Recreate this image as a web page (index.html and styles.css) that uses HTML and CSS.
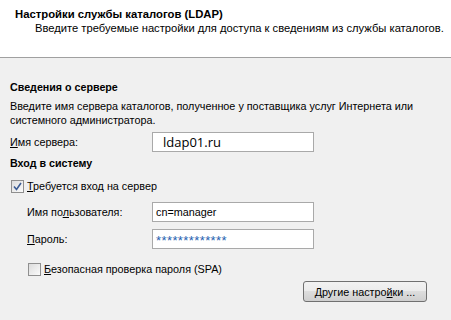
FILE: index.html
```html
<!DOCTYPE html>
<html lang="ru">
<head>
<meta charset="utf-8">
<link rel="stylesheet" href="styles.css">
</head>
<body>
<div class="window">
  <header class="header">
    <div class="title">Настройки службы каталогов (LDAP)</div>
    <div class="subtitle">Введите требуемые настройки для доступа к сведениям из службы каталогов.</div>
  </header>
  <main class="content">
    <div class="section-title first">Сведения о сервере</div>
    <p class="desc">Введите имя сервера каталогов, полученное у поставщика услуг Интернета или системного администратора.</p>
    <div class="row r-server">
      <label class="label"><u>И</u>мя сервера:</label>
      <div class="input big">ldap01.ru</div>
    </div>
    <div class="section-title second">Вход в систему</div>
    <div class="check-row">
      <span class="checkbox checked"><svg width="9" height="9" viewBox="0 0 9 9"><path d="M1 4.5 L3.5 7.5 L8 1" fill="none" stroke="#3c5c94" stroke-width="1.6"/></svg></span>
      <span><u>Т</u>ребуется вход на сервер</span>
    </div>
    <div class="indent">
      <div class="row r-user">
        <label class="label">Имя по<u>л</u>ьзователя:</label>
        <div class="input">cn=manager</div>
      </div>
      <div class="row r-pass">
        <label class="label"><u>П</u>ароль:</label>
        <div class="input pass">*************</div>
      </div>
      <div class="check-row spa">
        <span class="checkbox"></span>
        <span><u>Б</u>езопасная проверка пароля (SPA)</span>
      </div>
    </div>
    <div class="actions">
      <button class="button">Другие настро<u>й</u>ки ...</button>
    </div>
  </main>
</div>
</body>
</html>
```
FILE: styles.css
```css
html, body {
  margin: 0;
  padding: 0;
}
body {
  width: 451px;
  height: 320px;
  overflow: hidden;
  font-family: "Liberation Sans", Arial, sans-serif;
  font-size: 10.8px;
  color: #000;
  background: #f0f0f0;
}
.window {
  width: 451px;
  height: 320px;
  display: flex;
  flex-direction: column;
}
.header {
  background: #fff;
  height: 58px;
  box-sizing: border-box;
  border-bottom: 1px solid #a0a0a0;
  padding: 7px 0 0 15px;
}
.title {
  font-weight: bold;
  font-size: 11.3px;
  line-height: 14px;
}
.subtitle {
  padding-left: 20px;
  font-size: 11.2px;
  line-height: 14px;
}
.content {
  flex: 1;
  padding: 0 0 0 10px;
}
.section-title {
  font-weight: bold;
  font-size: 10.7px;
  line-height: 14px;
}
.section-title.first {
  margin-top: 22px;
}
.section-title.second {
  margin-top: 4px;
}
.desc {
  margin: 5px 0 0;
  width: 430px;
  line-height: 14px;
}
.row {
  display: flex;
  align-items: center;
  height: 20px;
}
.r-server {
  margin-top: 5px;
}
.label {
  width: 142px;
  flex: none;
}
.indent .label {
  width: 125px;
}
.input {
  box-sizing: border-box;
  width: 162px;
  height: 20px;
  background: #fff;
  border: 1px solid #a9a9a9;
  padding: 0 3px;
  display: flex;
  align-items: center;
}
.input.big {
  font-family: "Open Sans", "Noto Sans", sans-serif;
  font-size: 13px;
  padding-left: 10px;
}
.input.pass {
  color: #1f5fb0;
  font-size: 13px;
  letter-spacing: 0.4px;
  padding-top: 3px;
}
.check-row {
  display: flex;
  align-items: center;
  gap: 3px;
  height: 14px;
  margin-top: 9px;
}
.checkbox {
  box-sizing: border-box;
  width: 13px;
  height: 13px;
  border: 1px solid #8f8f8f;
  background: linear-gradient(135deg, #dcdcdc, #fbfbfb);
  display: flex;
  align-items: center;
  justify-content: center;
  margin-left: 1px;
}
.indent {
  padding-left: 17px;
}
.r-user {
  margin-top: 9px;
}
.r-pass {
  margin-top: 7px;
}
.spa {
  margin-top: 13px;
}
.actions {
  display: flex;
  justify-content: flex-end;
  padding-right: 24px;
  margin-top: 5px;
}
.button {
  font: inherit;
  height: 21px;
  width: 124px;
  box-sizing: border-box;
  border: 1px solid #707070;
  border-radius: 3px;
  background: linear-gradient(#f2f2f2 0%, #ebebeb 49%, #dddddd 50%, #cfcfcf 100%);
  padding: 0;
  color: #000;
}
```
